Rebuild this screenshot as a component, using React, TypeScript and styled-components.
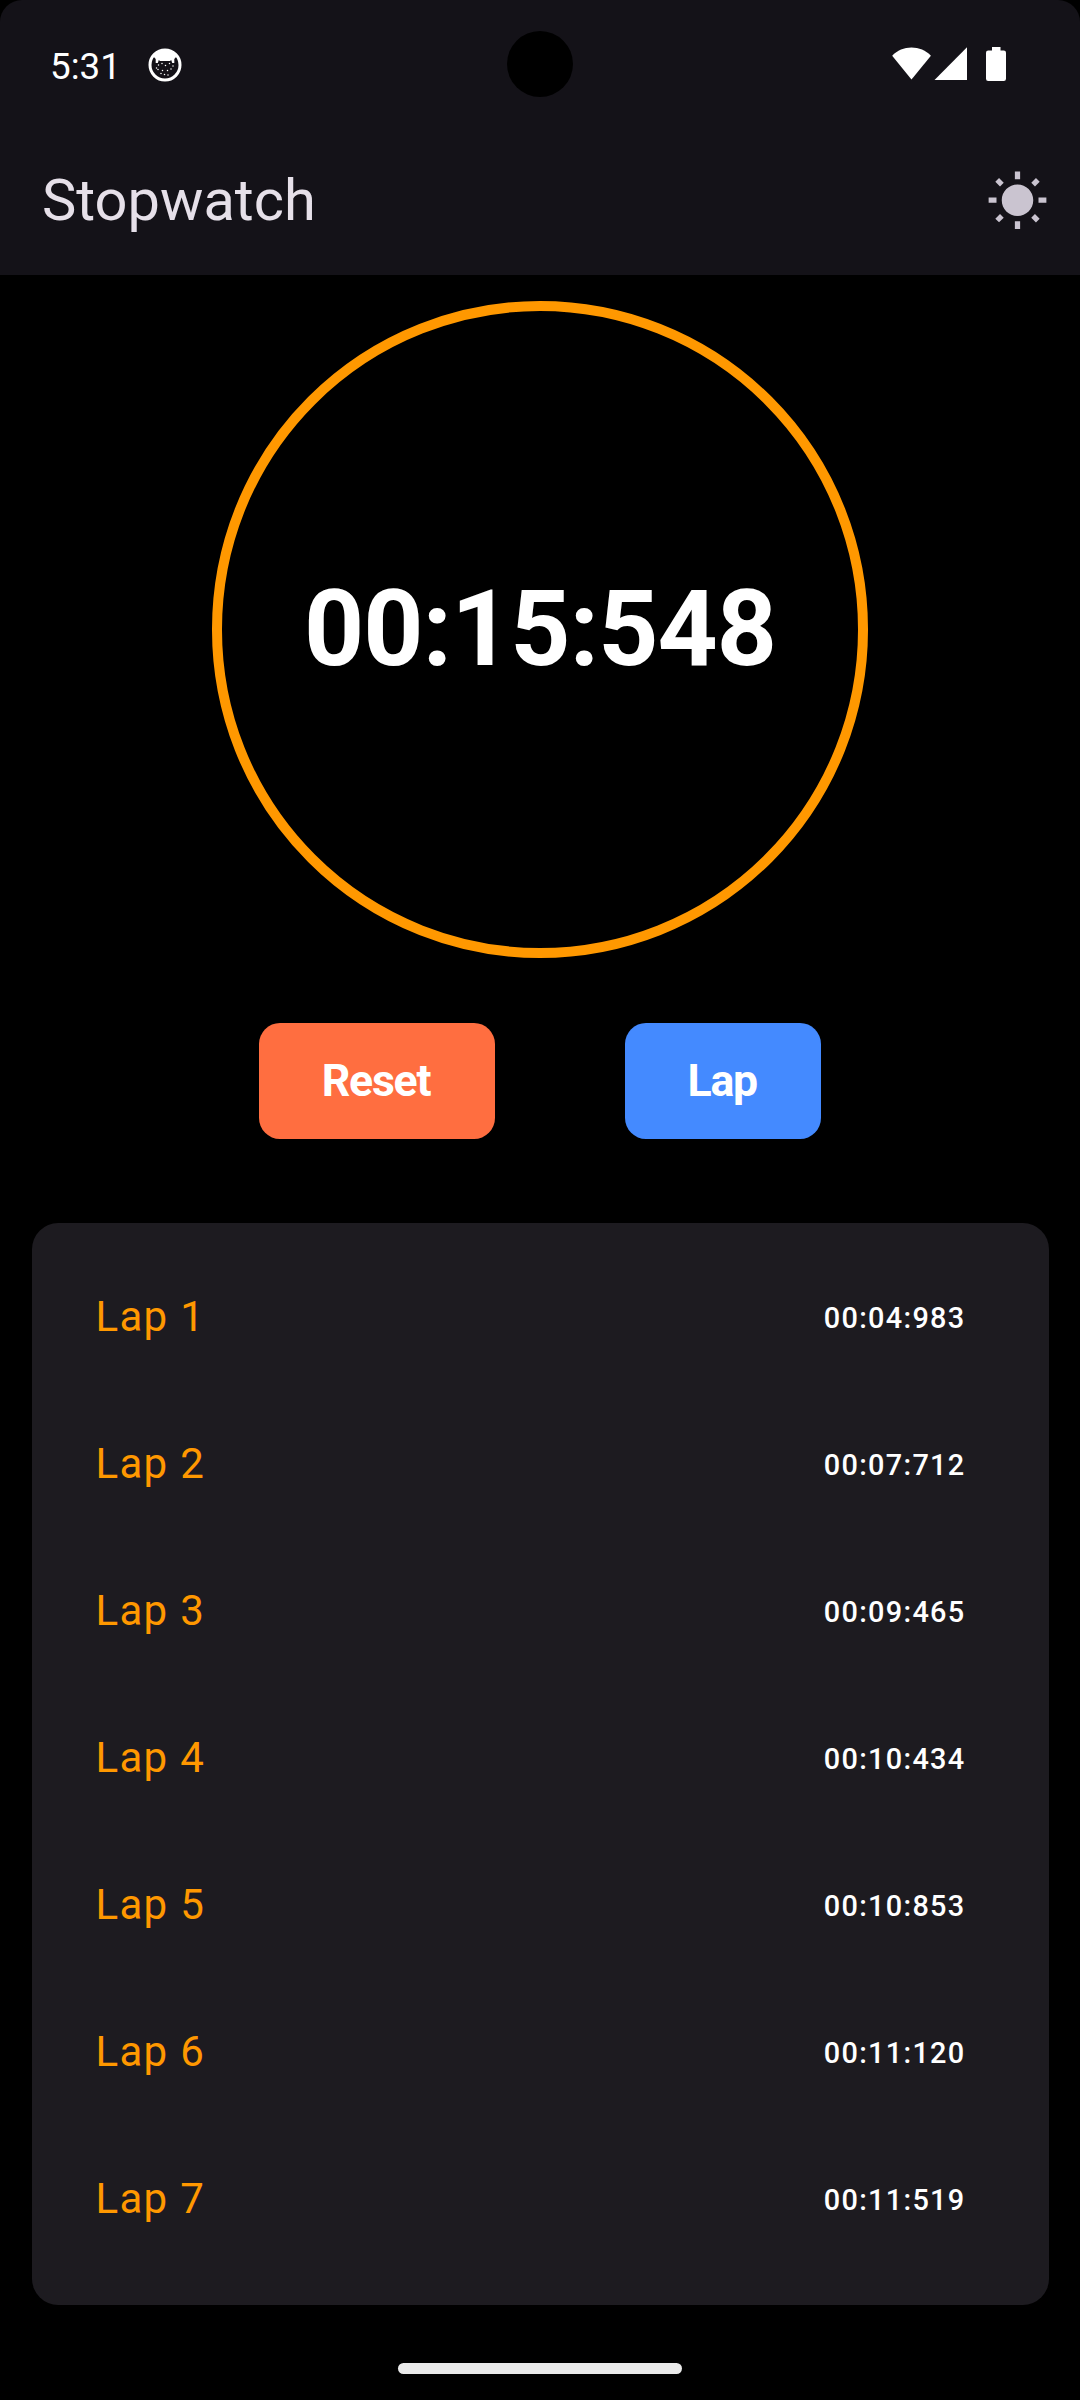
import React from "react";
import styled, { createGlobalStyle } from "styled-components";

const GlobalStyle = createGlobalStyle`
  *, *::before, *::after { box-sizing: border-box; }
  html, body { margin: 0; padding: 0; background: #000; }
  body { font-family: Roboto, "Liberation Sans", sans-serif; }
`;

const Screen = styled.div`
  width: 1080px;
  height: 2400px;
  display: flex;
  flex-direction: column;
  background: #000;
  overflow: hidden;
`;

const Header = styled.header`
  height: 275px;
  flex: none;
  display: flex;
  flex-direction: column;
  background: #141218;
  border-radius: 22px 22px 0 0;
`;

const StatusBar = styled.div`
  position: relative;
  height: 128px;
  flex: none;
  display: flex;
  justify-content: space-between;
  align-items: center;
  padding: 0 74px 0 50px;
`;

const StatusGroup = styled.div<{ $drop?: number }>`
  display: flex;
  align-items: center;
  padding-top: ${(p) => p.$drop ?? 0}px;
`;

const Clock = styled.span`
  width: 98px;
  font-size: 36.75px;
  line-height: 44px;
  padding-top: 4px;
  color: #fff;
`;

const Camera = styled.div`
  position: absolute;
  left: 507px;
  top: 31px;
  width: 66px;
  height: 66px;
  border-radius: 50%;
  background: #000;
`;

const AppBar = styled.div`
  height: 147px;
  flex: none;
  display: flex;
  align-items: center;
  justify-content: space-between;
  padding: 0 31.5px 0 42px;
`;

const Title = styled.h1`
  margin: 0;
  padding-bottom: 3px;
  font-size: 57.75px;
  line-height: 74px;
  font-weight: 400;
  color: #e6e0e9;
`;

const ThemeButton = styled.button`
  width: 63px;
  height: 63px;
  padding: 0;
  border: 0;
  background: none;
  color: #cac4d0;
  display: flex;
`;

const Dial = styled.div`
  width: 656.25px;
  height: 656.25px;
  flex: none;
  margin: 26.25px auto 0;
  border: 10.5px solid #ff9800;
  border-radius: 50%;
  display: flex;
  align-items: center;
  justify-content: center;
`;

const Elapsed = styled.span`
  padding-top: 2px;
  font-size: 105px;
  line-height: 124px;
  font-weight: 700;
  letter-spacing: -1px;
  color: #fff;
  white-space: nowrap;
`;

const Actions = styled.div`
  display: flex;
  justify-content: center;
  gap: 130.5px;
  margin-top: 65.5px;
`;

const ActionButton = styled.button<{ $color: string; $width: number }>`
  width: ${(p) => p.$width}px;
  height: 115.5px;
  padding: 1px 1.5px 0 0;
  border: 0;
  border-radius: 21px;
  background: ${(p) => p.$color};
  color: #fff;
  font: 700 44.6px/52px Roboto, "Liberation Sans", sans-serif;
  letter-spacing: -1.2px;
`;

const LapCard = styled.ul`
  list-style: none;
  width: 1017px;
  height: 1082.7px;
  flex: none;
  margin: 84px auto 0;
  padding: 20.6px 83px 0 64px;
  border-radius: 26.25px;
  background: #1d1b20;
`;

const LapRow = styled.li`
  height: 147px;
  display: flex;
  align-items: center;
  justify-content: space-between;
`;

const LapName = styled.span`
  font-size: 42px;
  line-height: 63px;
  letter-spacing: 1.3px;
  color: #ff9800;
`;

const LapTime = styled.span`
  padding-top: 2px;
  font-size: 28.875px;
  line-height: 42px;
  font-weight: 500;
  letter-spacing: 1.3px;
  color: #fff;
`;

const HomeHandle = styled.div`
  width: 284px;
  height: 11px;
  flex: none;
  margin: 57.8px auto 0;
  border-radius: 6px;
  background: #eaeaea;
`;

const laps = [
  "00:04:983",
  "00:07:712",
  "00:09:465",
  "00:10:434",
  "00:10:853",
  "00:11:120",
  "00:11:519",
];

const specks = [
  [10.5, 17], [14, 15.5], [17.5, 17.5], [21.5, 15.5], [25, 18], [8.5, 20],
  [10, 21.5], [14.5, 22.5], [19.5, 22.5], [23, 21], [13, 25.500], [16.5, 26.5], [20, 27],
];

function CatBadge() {
  return (
    <svg width="34" height="34" viewBox="0 0 34 34">
      <circle cx="17" cy="17" r="15" fill="none" stroke="#fff" strokeWidth="3" />
      <path d="M7 6Q17-2 27 6L28.500 8.500 26.300 11 26.300 15 24.200 15 23.200 12 22 13H12L10.800 12 9.800 15 7.700 15 7.700 11 5.500 8.500Z" fill="#fff" />
      {specks.map(([x, y]) => (
        <circle key={`${x}-${y}`} cx={x} cy={y} r=".75" fill="#fff" />
      ))}
    </svg>
  );
}

function StatusIcons() {
  return (
    <svg width="116" height="36" viewBox="0 0 116 36" fill="#fff">
      <path d="M2.200 9.800C12 -1.200 31 -1.200 40.900 9.800L21.500 33.600Z" />
      <path d="M44.500 34L77 1.200V34Z" />
      <path d="M102 1h8.500v3.500h3.300a2.200 2.200 0 0 1 2.200 2.200v26.100a2.200 2.200 0 0 1-2.200 2.200H98.200a2.200 2.200 0 0 1-2.200-2.200V6.700a2.200 2.200 0 0 1 2.200-2.200H102Z" />
    </svg>
  );
}

function SunIcon() {
  return (
    <svg width="63" height="63" viewBox="0 0 24 24" fill="currentColor">
      <path d="M6.760 4.840l-1.800-1.790-1.410 1.410 1.790 1.790 1.420-1.410zM4 10.500H1v2h3v-2zm9-9.950h-2V3.500h2V.55zm7.450 3.910l-1.410-1.410-1.790 1.790 1.410 1.410 1.790-1.790zm-3.210 13.700l1.790 1.800 1.410-1.410-1.800-1.790-1.400 1.400zM20 10.500v2h3v-2h-3zm-8-5c-3.310 0-6 2.690-6 6s2.690 6 6 6 6-2.690 6-6-2.690-6-6-6zm-1 16.950h2V19.500h-2v2.950zm-7.450-3.910l1.410 1.410 1.790-1.800-1.410-1.410-1.790 1.800z" />
    </svg>
  );
}

export default function App() {
  return (
    <Screen>
      <GlobalStyle />
      <Header>
        <StatusBar>
          <StatusGroup $drop={2}>
            <Clock>5:31</Clock>
            <CatBadge />
          </StatusGroup>
          <Camera />
          <StatusGroup>
            <StatusIcons />
          </StatusGroup>
        </StatusBar>
        <AppBar>
          <Title>Stopwatch</Title>
          <ThemeButton aria-label="Switch theme">
            <SunIcon />
          </ThemeButton>
        </AppBar>
      </Header>
      <Dial>
        <Elapsed>00:15:548</Elapsed>
      </Dial>
      <Actions>
        <ActionButton $color="#ff6e40" $width={235.5}>Reset</ActionButton>
        <ActionButton $color="#448aff" $width={196}>Lap</ActionButton>
      </Actions>
      <LapCard>
        {laps.map((time, i) => (
          <LapRow key={time}>
            <LapName>Lap {i + 1}</LapName>
            <LapTime>{time}</LapTime>
          </LapRow>
        ))}
      </LapCard>
      <HomeHandle />
    </Screen>
  );
}
